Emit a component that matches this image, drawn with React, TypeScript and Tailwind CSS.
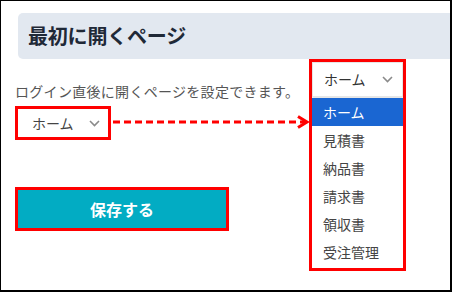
const jp = { fontFamily: '"Noto Sans CJK JP", "Noto Sans", sans-serif' };

const options = ["ホーム", "見積書", "納品書", "請求書", "領収書", "受注管理"];

function Chevron({ className = "" }: { className?: string }) {
  return (
    <svg width="11" height="7" viewBox="0 0 11 7" className={className}>
      <path d="M1 1l4.5 4.5L10 1" fill="none" stroke="#8a8a8a" strokeWidth="1.6" />
    </svg>
  );
}

export default function App() {
  return (
    <div
      className="relative w-[452px] h-[292px] bg-white border-l border-t border-r-2 border-b-2 border-black overflow-hidden"
      style={jp}
    >
      {/* Header */}
      <div className="mt-[12px] ml-[17px] h-[46px] rounded-l-[5px] bg-[#e2e8f0] pl-[10px] flex items-center">
        <h1 className="text-[20px] font-bold text-[#1f2937] tracking-[-0.2px]">最初に開くページ</h1>
      </div>

      <div className="flex items-start">
        {/* Left column */}
        <div className="ml-[14px] w-[294px] flex flex-col items-start">
          <p className="mt-[22px] text-[14px] leading-[20px] text-[#555] tracking-[0.3px]">
            ログイン直後に開くページを設定できます。
          </p>
          <div className="mt-[5px] w-[96px] h-[34px] border-[3px] border-[#ff0000] bg-white flex items-center justify-between pl-[14px] pr-[8px]">
            <span className="text-[14px] text-[#444]">ホーム</span>
            <Chevron />
          </div>
          <button className="mt-[47px] w-[214px] h-[44px] border-[3px] border-[#ff0000] bg-[#02acc3] text-white text-[16px] font-bold flex items-center justify-center">
            保存する
          </button>
        </div>

        {/* Dropdown */}
        <div className="w-[97px] border-[3px] border-[#ff0000] bg-white pb-[2px]">
          <div className="h-[35px] flex items-center justify-between pl-[11px] pr-[9px] shadow-[0_2px_3px_rgba(0,0,0,0.12)] border border-[#e6e6e6]">
            <span className="text-[14px] text-[#333]">ホーム</span>
            <Chevron />
          </div>
          <ul className="mt-[1px]">
            {options.map((o, i) => (
              <li
                key={o}
                className={`h-[28px] pl-[11px] flex items-center text-[14px] ${
                  i === 0 ? "bg-[#1a66d2] text-white" : "text-[#444]"
                }`}
              >
                {o}
              </li>
            ))}
          </ul>
        </div>
      </div>

      {/* Annotation arrow */}
      <svg className="absolute left-[111px] top-[114px]" width="200" height="16" viewBox="0 0 200 16">
        <line x1="1" y1="7" x2="193" y2="7" stroke="#ff0000" strokeWidth="3" strokeDasharray="7 4" />
        <polyline points="186,1.5 195,7 186,12.5" fill="none" stroke="#ff0000" strokeWidth="3" />
      </svg>
    </div>
  );
}
